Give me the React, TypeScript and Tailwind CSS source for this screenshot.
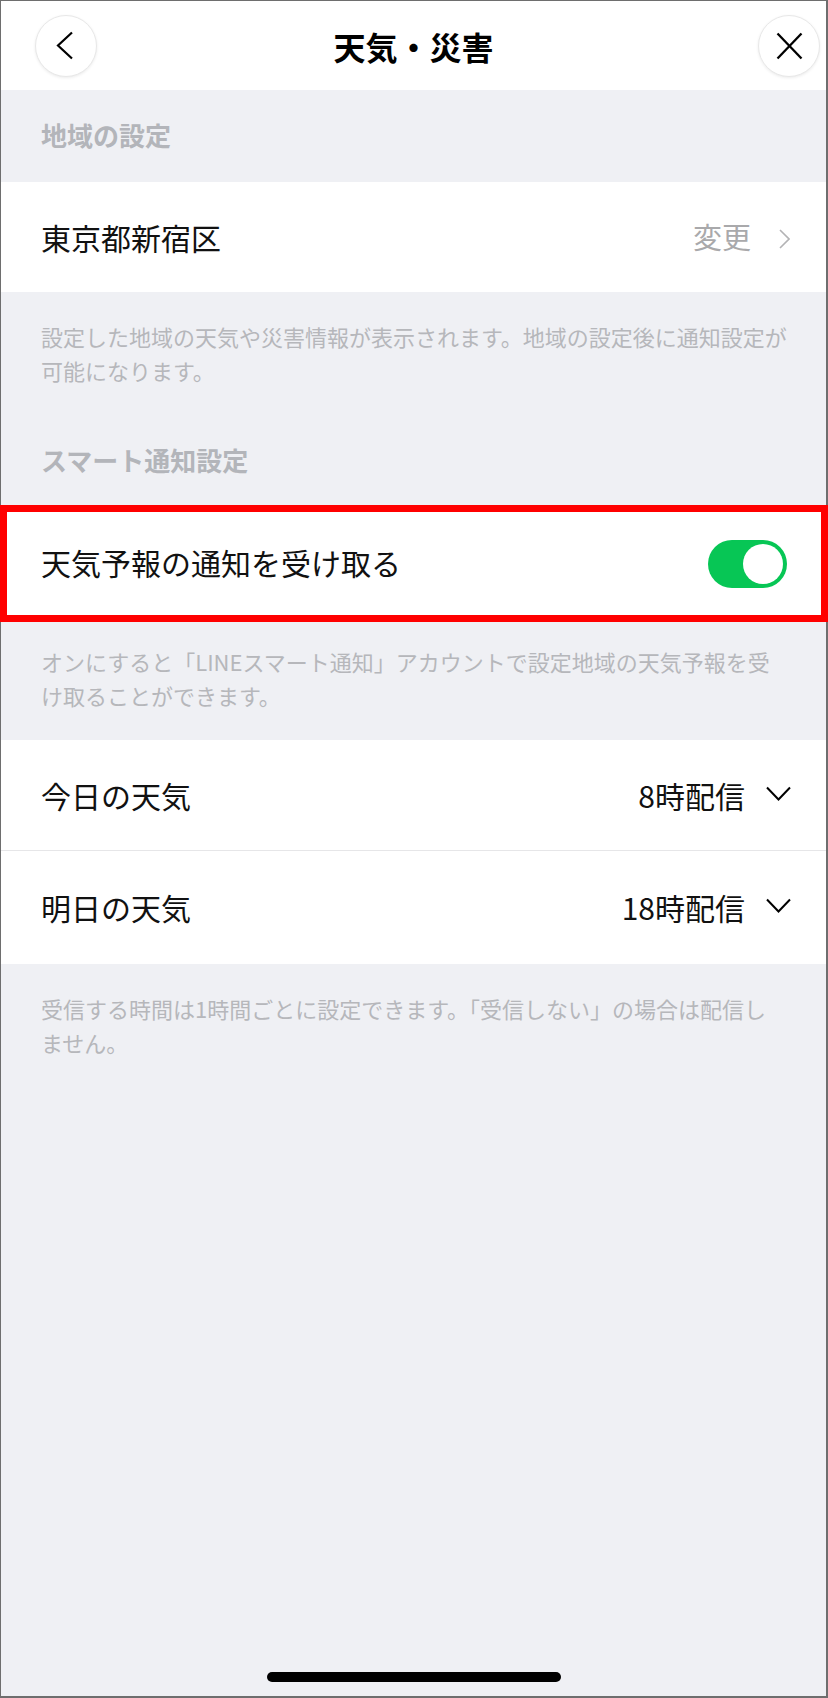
const jp = { fontFamily: '"Noto Sans CJK JP", "Noto Sans", sans-serif' };

export default function App() {
  return (
    <div
      className="w-[828px] h-[1698px] bg-[#eff0f4] border-l border-t border-r-2 border-b-2 border-[#6e6e6e] flex flex-col"
      style={jp}
    >
      {/* header */}
      <div className="h-[89px] bg-white grid grid-cols-[1fr_auto_1fr] items-center px-[6px]">
        <RoundButton className="justify-self-start ml-[28px]">
          <svg width="18" height="29" viewBox="0 0 18 29" fill="none" className="-ml-[2px]">
            <polyline points="16,1.5 2,14.5 16,27.5" stroke="#000" strokeWidth="2.2" />
          </svg>
        </RoundButton>
        <h1 className="text-[32px] font-bold text-black leading-none">天気・災害</h1>
        <RoundButton className="justify-self-end">
          <svg width="27" height="28" viewBox="0 0 27 28" fill="none">
            <line x1="1.5" y1="1.5" x2="25.5" y2="26.5" stroke="#000" strokeWidth="2.3" />
            <line x1="25.5" y1="1.5" x2="1.5" y2="26.5" stroke="#000" strokeWidth="2.3" />
          </svg>
        </RoundButton>
      </div>

      <SectionHeader title="地域の設定" />

      <div className="h-[110px] bg-white flex items-center pl-[40px] pr-[36px]">
        <span className="text-[30px] text-[#111] flex-1">東京都新宿区</span>
        <span className="text-[29px] text-[#a9a9ab]">変更</span>
        <svg width="11" height="20" viewBox="0 0 11 20" fill="none" className="ml-[28px] mt-[3px]">
          <polyline points="1,1 10,10 1,19" stroke="#b3b3b5" strokeWidth="1.6" />
        </svg>
      </div>

      <Note lines={['設定した地域の天気や災害情報が表示されます。地域の設定後に通知設定が', '可能になります。']} />

      <SectionHeader title="スマート通知設定" />

      <div className="relative h-[110px] bg-white flex items-center pl-[40px] pr-[39px]">
        <span className="text-[30px] text-[#111] flex-1">天気予報の通知を受け取る</span>
        <div className="relative w-[79px] h-[48px] rounded-full bg-[#07c655] mt-[4px]">
          <div className="absolute right-[4px] top-[4px] w-[40px] h-[40px] rounded-full bg-white" />
        </div>
        <div className="absolute -left-[1px] -right-[2px] -top-[2px] -bottom-[5px] border-[7px] border-[#ff0000] pointer-events-none" />
      </div>

      <Note lines={['オンにすると「LINEスマート通知」アカウントで設定地域の天気予報を受', 'け取ることができます。']} />

      <div className="bg-white">
        <SelectRow label="今日の天気" value="8時配信" border />
        <SelectRow label="明日の天気" value="18時配信" />
      </div>

      <Note lines={['受信する時間は1時間ごとに設定できます。「受信しない」の場合は配信し', 'ません。']} />

      <div className="flex-1" />
      <div className="flex justify-center pb-[14px]">
        <div className="w-[294px] h-[10px] rounded-full bg-black" />
      </div>
    </div>
  );
}

function RoundButton({ children, className }: { children: React.ReactNode; className?: string }) {
  return (
    <div
      className={`w-[62px] h-[62px] rounded-full bg-white border border-[#e8e8e8] shadow-[0_1px_3px_rgba(0,0,0,0.08)] flex items-center justify-center ${className ?? ''}`}
    >
      {children}
    </div>
  );
}

function SectionHeader({ title }: { title: string }) {
  return (
    <div className="h-[92px] flex items-center pl-[40px]">
      <h2 className="text-[26px] font-bold text-[#b3b5ba] leading-none -mt-[2px]">{title}</h2>
    </div>
  );
}

function Note({ lines }: { lines: string[] }) {
  return (
    <div className="pt-[27px] pb-[28px] pl-[40px] pr-[20px]">
      {lines.map((l) => (
        <p key={l} className="text-[22px] leading-[34px] text-[#b6b7bb] whitespace-nowrap">
          {l}
        </p>
      ))}
    </div>
  );
}

function SelectRow({ label, value, border }: { label: string; value: string; border?: boolean }) {
  return (
    <div
      className={`flex items-center pl-[40px] pr-[35px] ${border ? 'h-[111px] border-b border-[#e6e6e8]' : 'h-[113px]'}`}
    >
      <span className="text-[30px] text-[#111] flex-1">{label}</span>
      <span className="text-[30px] text-[#111]">{value}</span>
      <svg width="25" height="15" viewBox="0 0 25 15" fill="none" className="ml-[21px] -mt-[4px]">
        <polyline points="1,1.5 12.5,13.5 24,1.5" stroke="#000" strokeWidth="2" />
      </svg>
    </div>
  );
}
